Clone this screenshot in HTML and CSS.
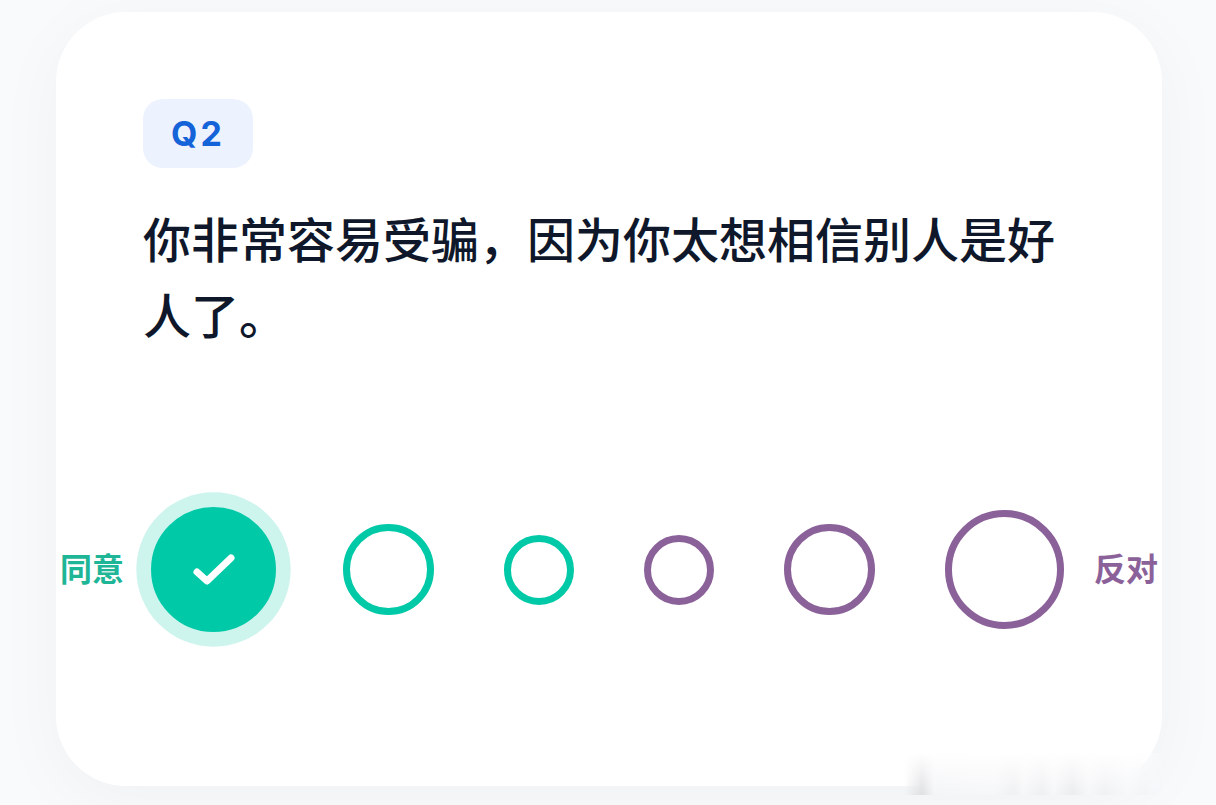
FILE: index.html
```html
<!DOCTYPE html>
<html lang="zh-CN">
<head>
    <meta charset="UTF-8">
    <meta name="viewport" content="width=device-width, initial-scale=1.0">
    <title>Q2</title>
    <link rel="stylesheet" href="styles.css">
</head>
<body>
    <main class="card">
        <div class="question">
            <span class="badge">Q2</span>
            <h1 id="question2">你非常容易受骗，因为你太想相信别人是好人了。</h1>
        </div>

        <form class="scale" role="radiogroup" aria-labelledby="question2">
            <label class="side agree" for="answer1">同意</label>
            <div class="options">
                <span class="option agree large">
                    <input type="radio" name="answer" id="answer1" value="1" checked>
                    <svg class="check" viewBox="0 0 48 48" fill="none" stroke="currentColor" stroke-width="7" stroke-linecap="round" stroke-linejoin="round"><path d="M7 26 L17 35 L41 12"/></svg>
                </span>
                <span class="option agree medium"><input type="radio" name="answer" value="2" aria-label="2"></span>
                <span class="option agree small"><input type="radio" name="answer" value="3" aria-label="3"></span>
                <span class="option disagree small"><input type="radio" name="answer" value="4" aria-label="4"></span>
                <span class="option disagree medium"><input type="radio" name="answer" value="5" aria-label="5"></span>
                <span class="option disagree large"><input type="radio" name="answer" id="answer6" value="6"></span>
            </div>
            <label class="side disagree" for="answer6">反对</label>
        </form>
    </main>
    <div class="smudge"></div>
</body>
</html>
```

FILE: styles.css
```css
* {
    box-sizing: border-box;
}
body {
    margin: 0;
    min-height: 100vh;
    padding: 12px 54px 19px 56px;
    position: relative;
    background-color: #f8fafc;
    font-family: Inter, "Noto Sans CJK SC", sans-serif;
    color: #0f172a;
}
.card {
    padding: 87px 0 157px;
    background-color: #fff;
    border-radius: 70px;
    box-shadow: 0 14px 70px rgba(0, 0, 0, 0.04);
}
.question {
    padding: 0 87px;
}
.badge {
    display: block;
    width: fit-content;
    padding: 17px 28px;
    border-radius: 20px;
    background-color: #edf2ff;
    color: #1463d8;
    font-size: 34px;
    font-weight: 700;
    line-height: 35px;
    letter-spacing: 3px;
}
h1 {
    margin: 35px 0 0;
    font-size: 48px;
    font-weight: 500;
    line-height: 76px;
}
.scale {
    display: flex;
    justify-content: center;
    align-items: center;
    gap: 30px;
    margin-top: 155px;
}
.side {
    flex: none;
    font-size: 32px;
    font-weight: 700;
    line-height: 40px;
}
.agree {
    color: #00c9a7;
}
.disagree {
    color: #8b6199;
}
.side.agree {
    color: #1fb597;
}
.options {
    display: flex;
    align-items: center;
    gap: 70px;
}
.option {
    position: relative;
    display: block;
}
.large {
    width: 119px;
    height: 119px;
}
.medium {
    width: 91px;
    height: 91px;
}
.small {
    width: 70px;
    height: 70px;
}
.option input {
    appearance: none;
    display: block;
    width: 100%;
    height: 100%;
    margin: 0;
    border: 7px solid currentColor;
    border-radius: 50%;
    background-color: #fff;
    color: inherit;
    cursor: pointer;
}
.option input:checked {
    background-color: currentColor;
    box-shadow: 0 0 0 14px #cdf4ed;
    transform: scale(1.05);
}
.check {
    position: absolute;
    top: 50%;
    left: 50%;
    width: 48px;
    height: 48px;
    transform: translate(-50%, -50%);
    color: #fff;
    pointer-events: none;
}
/* faded strip over the bottom right corner */
.smudge {
    position: absolute;
    right: 0;
    bottom: 10px;
    width: 312px;
    height: 42px;
    background:
        linear-gradient(to bottom, #fff, rgba(255, 255, 255, 0)),
        linear-gradient(to right, rgba(244, 245, 247, 0), #dfe0e2 18px, #f4f5f7 30px, #f6f7f8 90px, #eff0f1 110px, #f6f7f8 120px, #eeeff1 138px, #f6f7f8 150px, #ebecee 168px, #f6f7f8 185px, #f0f1f3 200px, #f6f8fa 225px, #f1f3f5 240px, #f6f8fa 260px, #f2f4f6 280px, #f6f8fa);
    mask-image: linear-gradient(to right, #000 230px, transparent 260px);
}
```
